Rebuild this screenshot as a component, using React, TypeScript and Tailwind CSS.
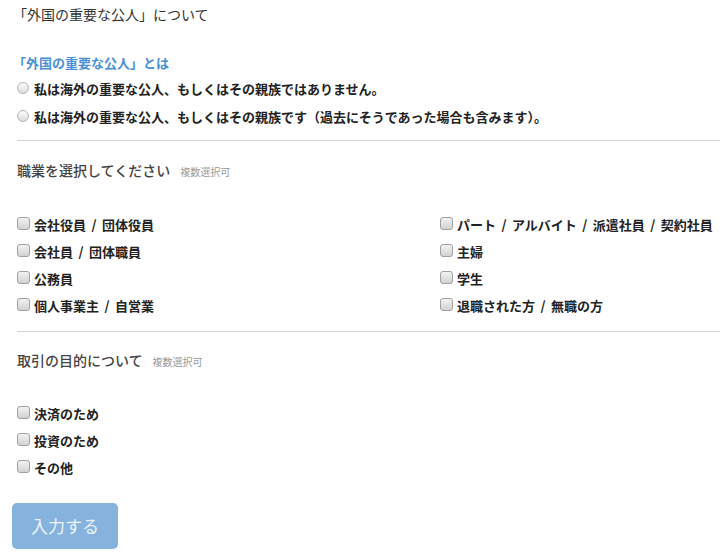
const font = { fontFamily: '"Noto Sans CJK JP", "Noto Sans", sans-serif' }

function Radio({ label }: { label: string }) {
  return (
    <label className="flex items-center h-[28px] gap-[5px]">
      <span className="w-[12px] h-[12px] rounded-full border border-[#b4b4b4] bg-gradient-to-b from-[#fdfdfd] to-[#dcdcdc] shrink-0 -mt-[2px]" />
      <span className="text-[13px] font-bold text-[#222]">{label}</span>
    </label>
  )
}

function Check({ label }: { label: string }) {
  return (
    <label className="flex items-center h-[27px] gap-[4px]">
      <span className="w-[13px] h-[13px] rounded-[3px] border border-[#a0a0a0] bg-gradient-to-b from-[#f2f2f2] to-[#d2d2d2] shrink-0 -mt-[3px]" />
      <span className="text-[13px] font-bold text-[#222] [word-spacing:2.5px]">{label}</span>
    </label>
  )
}

function Heading({ title }: { title: string }) {
  return (
    <div className="flex items-baseline gap-[10px] h-[20px]">
      <span className="text-[14px] text-[#444] font-medium">{title}</span>
      <span className="text-[10px] text-[#999]">複数選択可</span>
    </div>
  )
}

export default function App() {
  const jobsLeft = ['会社役員 / 団体役員', '会社員 / 団体職員', '公務員', '個人事業主 / 自営業']
  const jobsRight = ['パート / アルバイト / 派遣社員 / 契約社員', '主婦', '学生', '退職された方 / 無職の方']
  const purposes = ['決済のため', '投資のため', 'その他']

  return (
    <div className="w-[720px] h-[558px] bg-white overflow-hidden" style={font}>
      <div className="pl-[17px]">
        <div className="pt-[4px] h-[24px] text-[14px] text-[#333] leading-[20px] -ml-[4px]">「外国の重要な公人」について</div>

        <div className="mt-[29px] h-[20px] text-[13px] font-bold text-[#4a8fd6] leading-[20px] -ml-[4px]">「外国の重要な公人」とは</div>
        <div className="mt-[2px]">
          <Radio label="私は海外の重要な公人、もしくはその親族ではありません。" />
          <Radio label="私は海外の重要な公人、もしくはその親族です（過去にそうであった場合も含みます）。" />
        </div>

        <hr className="mt-[9px] border-0 border-t border-[#d0d0d0]" />

        <div className="mt-[19px]">
          <Heading title="職業を選択してください" />
        </div>

        <div className="mt-[31px] grid grid-cols-[423px_1fr]">
          <div className="flex flex-col">
            {jobsLeft.map((j) => (
              <Check key={j} label={j} />
            ))}
          </div>
          <div className="flex flex-col">
            {jobsRight.map((j) => (
              <Check key={j} label={j} />
            ))}
          </div>
        </div>

        <hr className="mt-[12px] border-0 border-t border-[#d0d0d0]" />

        <div className="mt-[18px]">
          <Heading title="取引の目的について" />
        </div>

        <div className="mt-[30px] flex flex-col">
          {purposes.map((p) => (
            <Check key={p} label={p} />
          ))}
        </div>

        <button className="mt-[22px] -ml-[5px] w-[106px] h-[46px] rounded-[5px] bg-[#86b3dd] text-[17px] text-[#eef3f9]">
          入力する
        </button>
      </div>
    </div>
  )
}
